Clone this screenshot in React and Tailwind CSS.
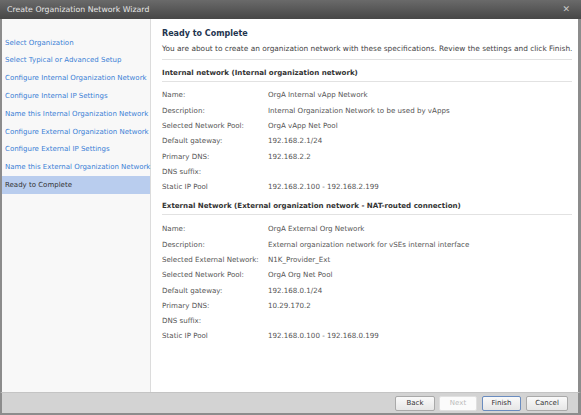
import React from 'react';

const steps = [
  'Select Organization',
  'Select Typical or Advanced Setup',
  'Configure Internal Organization Network',
  'Configure Internal IP Settings',
  'Name this Internal Organization Network',
  'Configure External Organization Network',
  'Configure External IP Settings',
  'Name this External Organization Network',
  'Ready to Complete',
];

const internalRows = [
  ['Name:', 'OrgA Internal vApp Network'],
  ['Description:', 'Internal Organization Network to be used by vApps'],
  ['Selected Network Pool:', 'OrgA vApp Net Pool'],
  ['Default gateway:', '192.168.2.1/24'],
  ['Primary DNS:', '192.168.2.2'],
  ['DNS suffix:', ''],
  ['Static IP Pool', '192.168.2.100 - 192.168.2.199'],
];

const externalRows = [
  ['Name:', 'OrgA External Org Network'],
  ['Description:', 'External organization network for vSEs internal interface'],
  ['Selected External Network:', 'N1K_Provider_Ext'],
  ['Selected Network Pool:', 'OrgA Org Net Pool'],
  ['Default gateway:', '192.168.0.1/24'],
  ['Primary DNS:', '10.29.170.2'],
  ['DNS suffix:', ''],
  ['Static IP Pool', '192.168.0.100 - 192.168.0.199'],
];

function Rows({ rows }) {
  return rows.map(([label, value]) => (
    <div key={label} className="h-[15.3px] flex items-center text-[#555] whitespace-nowrap">
      <div className="w-[106px] shrink-0">{label}</div>
      <div>{value}</div>
    </div>
  ));
}

export default function App() {
  return (
    <div className="w-[581px] h-[415px] flex flex-col bg-white text-[7.1px] overflow-hidden" style={{ fontFamily: '"DejaVu Sans", Verdana, sans-serif' }}>
      {/* barra del titolo */}
      <div className="h-[19px] shrink-0 flex items-center justify-between pl-[7px] pr-[11px] bg-gradient-to-b from-[#6a6a6a] to-[#474747] text-[#e6e6e6] text-[7.8px]">
        <span>Create Organization Network Wizard</span>
        <span className="text-[#c8c8c8] text-[9px] leading-none">✕</span>
      </div>

      <div className="flex-1 flex border-l-2 border-r-[3px] border-[#8c8c8c] min-h-0">
        <nav className="w-[149px] shrink-0 bg-[#f8f8f8] border-r border-[#dcdcdc] pt-[15px]">
          {steps.map((s) => (
            <div
              key={s}
              className={`h-[17.8px] flex items-center pl-[3px] whitespace-nowrap text-[7px] ${s === 'Ready to Complete' ? 'bg-[#b9cdee] text-[#333]' : 'text-[#3b7fd6]'}`}
            >
              {s}
            </div>
          ))}
        </nav>

        <main className="flex-1 pt-[8px] pl-[11px] pr-[9px]">
          <div className="h-[14px] flex items-center font-bold text-[8px] text-[#1f3550]">Ready to Complete</div>
          <div className="h-[15px] flex items-center text-[#444] whitespace-nowrap text-[7.4px]">
            You are about to create an organization network with these specifications. Review the settings and click Finish.
          </div>
          <div className="mt-[3px] border-t border-[#e2e2e2]" />

          <div className="h-[22px] flex items-end pb-[2px] border-b border-[#e2e2e2] font-bold text-[#333] whitespace-nowrap">
            Internal network (Internal organization network)
          </div>
          <div className="mt-[6px]">
            <Rows rows={internalRows} />
          </div>

          <div className="h-[20px] flex items-end pb-[2px] border-b border-[#e2e2e2] font-bold text-[#333] whitespace-nowrap">
            External Network (External organization network - NAT-routed connection)
          </div>
          <div className="mt-[7px]">
            <Rows rows={externalRows} />
          </div>
        </main>
      </div>

      <div className="h-[23px] shrink-0 flex items-center justify-end pr-[10px] bg-[#d3d3d3] border-l-2 border-r-[3px] border-b-2 border-[#8c8c8c] border-t border-t-[#c4c4c4] text-[7px]">
        <button className="w-[40px] h-[15px] rounded-[2px] border border-[#a9a9a9] bg-gradient-to-b from-[#fafafa] to-[#e6e6e6] text-[#333]">Back</button>
        <button className="ml-[4px] w-[38px] h-[15px] rounded-[2px] border border-[#e0e0e0] bg-[#fbfbfb] text-[#bbb]">Next</button>
        <button className="ml-[5px] w-[39px] h-[15px] rounded-[2px] border border-[#6a8cbf] bg-gradient-to-b from-[#fafafa] to-[#e6e6e6] text-[#333]">Finish</button>
        <button className="ml-[5px] w-[42px] h-[15px] rounded-[2px] border border-[#a9a9a9] bg-gradient-to-b from-[#fafafa] to-[#e6e6e6] text-[#333]">Cancel</button>
      </div>
    </div>
  );
}
